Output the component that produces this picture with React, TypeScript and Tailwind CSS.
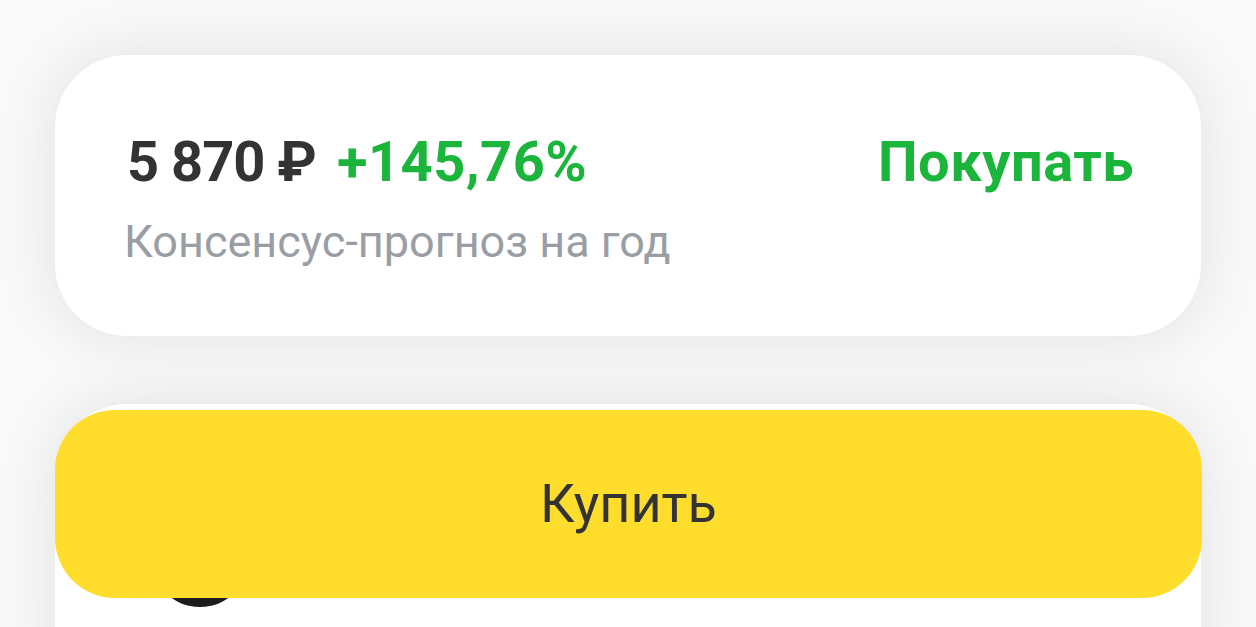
import React from 'react';

const font = { fontFamily: 'Roboto, "Noto Sans", sans-serif' };

function App() {
  return (
    <div className="relative h-[627px] overflow-hidden bg-[#f9f9f9] px-[55px] pt-[55px]" style={font}>
      {/* Forecast card */}
      <div className="flex h-[281px] flex-col rounded-[72px] bg-white pl-[72px] pr-[67px] pt-[79px] shadow-[0_0_60px_rgba(0,0,0,0.1)]">
        <div className="flex items-center justify-between">
          <div className="flex items-center gap-[21px] text-[56px] font-bold leading-none">
            <span className="tracking-[-1px] text-[#333333]">5 870 ₽</span>
            <span className="tracking-[0.5px] text-[#1cb53c]">+145,76%</span>
          </div>
          <span className="text-[56px] font-bold leading-none tracking-[0.5px] text-[#1cb53c]">Покупать</span>
        </div>
        <p className="ml-[-3px] mt-[29px] text-[45px] leading-none text-[#999da4]">Консенсус-прогноз на год</p>
      </div>

      {/* Next card, under the buy button */}
      <div className="mt-[68px] h-[300px] rounded-[72px] bg-white px-[95px] pt-[103px] shadow-[0_0_60px_rgba(0,0,0,0.1)]">
        <div className="flex items-center gap-[70px]">
          <div className="h-[100px] w-[100px] rounded-full bg-[#1d1d1f]" />
          <span className="text-[46px] leading-none text-[#333333]">Тинькофф Пульс</span>
        </div>
      </div>

      {/* Sticky buy button */}
      <button className="absolute left-[55px] right-[54px] top-[410px] flex h-[188px] items-center justify-center rounded-[60px] bg-[#ffdd2d] text-[54px] leading-none text-[#333333]">
        Купить
      </button>
    </div>
  );
}

export default App;
